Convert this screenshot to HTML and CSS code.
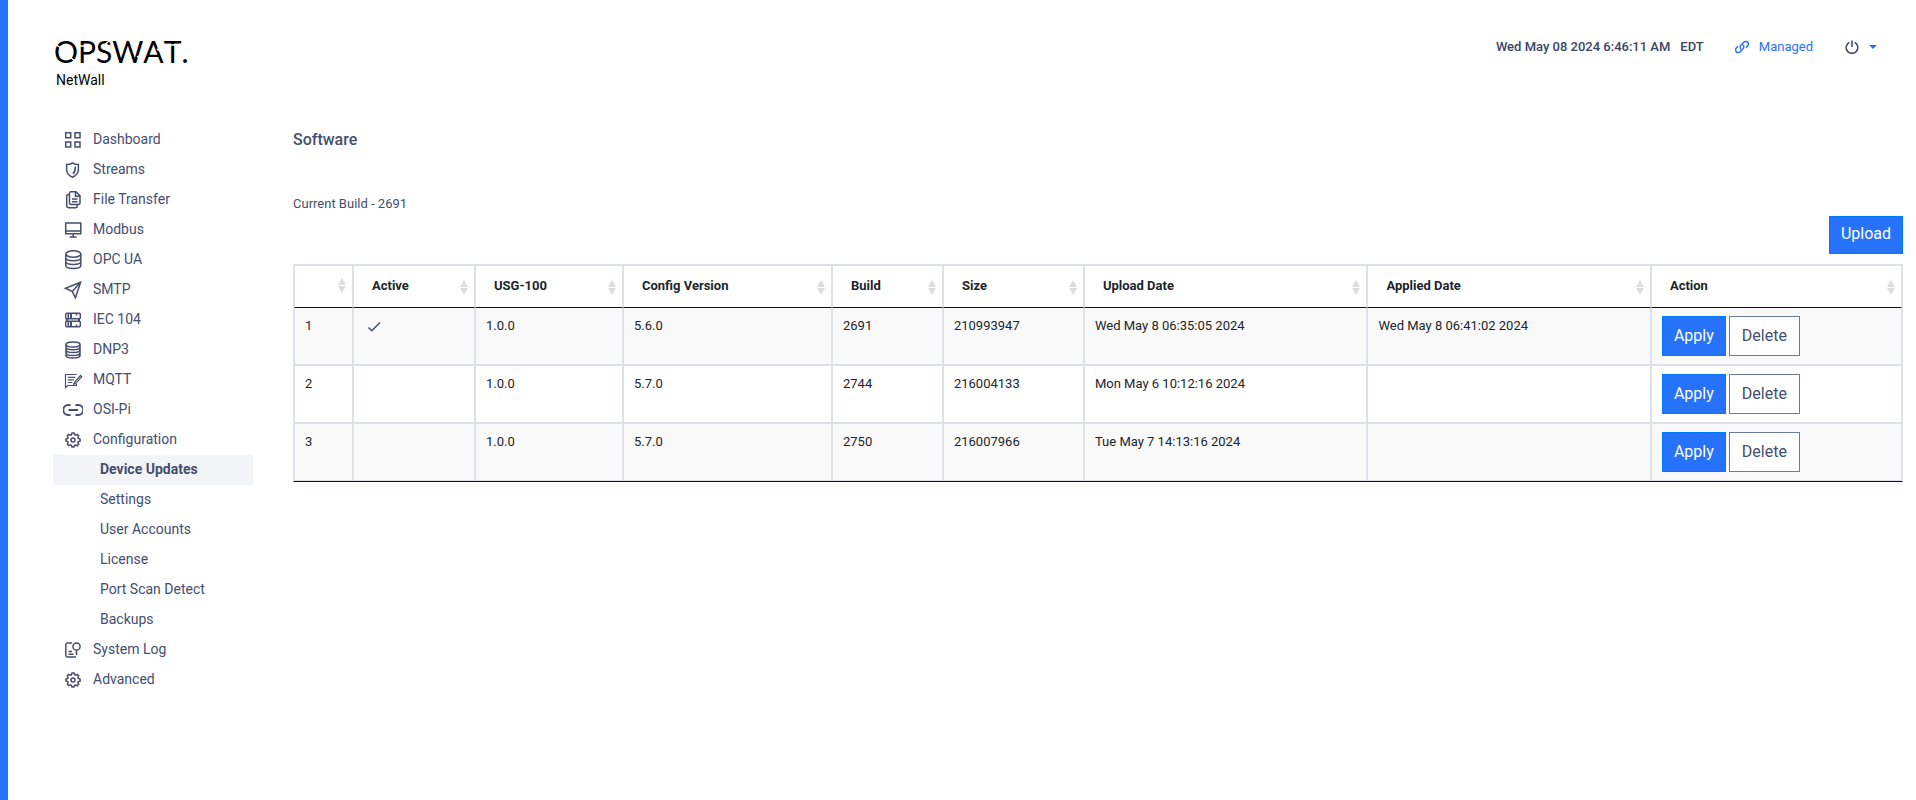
FILE: index.html
```
<!DOCTYPE html>
<html lang="en">
<head>
  <meta charset="UTF-8" />
  <meta name="viewport" content="width=device-width, initial-scale=1.0"/>
  <title>OPSWAT NetWall - Software</title>
  <link rel="stylesheet" href="styles.css">
</head>
<body>
  <div class="page">
    <header class="header">
      <div class="brand">
        <svg class="logo" width="150" height="32" viewBox="0 0 150 32" role="img" aria-label="OPSWAT.">
          <text class="logo-text" x="1" y="27">OPSWAT.</text>
          <!-- stencil cuts -->
          <path class="logo-cut" d="M2 8l6 4M17 21l6 5M27 10h5M55 6l-5 4M47 22l6-4M84 21l5-2M104 13l5 3M117 9h8"/>
        </svg>
        <span class="product">NetWall</span>
      </div>
      <div class="status">
        <span class="clock">Wed May 08 2024 6:46:11 AM</span>
        <span class="zone">EDT</span>
        <a class="managed" href="#">
          <svg class="icon-sm" viewBox="0 0 14 14"><path d="M6.2 9.2a2.8 2.8 0 0 1-.3-4L8.700 2.200a2.700 2.700 0 0 1 3.900 3.800L11 7.600M7.800 4.800a2.800 2.800 0 0 1 .3 4L5.300 11.800A2.700 2.700 0 0 1 1.400 8L3 6.400"/></svg>
          Managed
        </a>
        <button class="power" aria-label="Power">
          <svg class="icon-sm" viewBox="0 0 14 14"><path d="M7 .5v6.500M4.300 2.400a5.800 5.800 0 1 0 5.400 0"/></svg>
          <span class="caret"></span>
        </button>
      </div>
    </header>

    <div class="layout">
      <nav class="sidebar">
        <a class="nav-item" href="#"><svg class="icon" viewBox="0 0 20 20"><path d="M2.700 2.700h5v5h-5zM12 2.700h5v5h-5zM2.700 12h5v5h-5zM12 12h5v5h-5z"/></svg>Dashboard</a>
        <a class="nav-item" href="#"><svg class="icon" viewBox="0 0 20 20"><path d="M9.500 2.800c2 1.400 4 1.700 5.900 1.700v5c0 3.600-2.600 6.200-5.900 7.700-3.300-1.500-5.900-4.100-5.900-7.700v-5c1.900 0 3.900-.3 5.900-1.700zM12.300 6.500c.2 3.500-.5 5.500-2.300 7.500"/></svg>Streams</a>
        <a class="nav-item" href="#"><svg class="icon" viewBox="0 0 20 20"><path d="M8 1.800h5l4 4V13a1.500 1.500 0 0 1-1.500 1.500H8A1.500 1.500 0 0 1 6.500 13V3.300A1.500 1.500 0 0 1 8 1.800zM12.500 2v4.300H17M9 9h5.500M9 11.700h5.500M6.500 4.500h-1A1.800 1.800 0 0 0 3.700 6.300v9.200A2.300 2.300 0 0 0 6 17.800h6.500a1.800 1.800 0 0 0 1.800-1.800v-1.500"/></svg>File Transfer</a>
        <a class="nav-item" href="#"><svg class="icon" viewBox="0 0 20 20"><path d="M2.700 3h15.100v10.800H2.700zM2.700 11h15.100M10.200 13.800v3.200M6.800 17h6.800"/></svg>Modbus</a>
        <a class="nav-item" href="#"><svg class="icon" viewBox="0 0 20 20"><ellipse cx="10.300" cy="4" rx="7.500" ry="3.200"/><path d="M2.800 4v11.500c0 1.700 3.300 3 7.500 3s7.500-1.300 7.500-3V4M2.800 7.700c0 1.700 3.300 3 7.500 3s7.500-1.300 7.500-3M2.800 11.600c0 1.700 3.300 3 7.500 3s7.500-1.300 7.500-3"/></svg>OPC UA</a>
        <a class="nav-item" href="#"><svg class="icon" viewBox="0 0 20 20"><path d="M17.600 2.300 2.400 8.200l6.800 3.200 3.200 6.400zM9.200 11.400l8.400-9.100"/></svg>SMTP</a>
        <a class="nav-item" href="#"><svg class="icon" viewBox="0 0 20 20"><rect x="2.700" y="3.300" width="14.600" height="5.500" rx="1"/><rect x="2.700" y="11.300" width="14.600" height="5.500" rx="1"/><path d="M4 9v2M16 9v2M8 4v4M8 12v4" stroke-width="2"/><path d="M5.300 4v4M5.300 12v4M13.500 4v1.500M13.500 14.500V16"/></svg>IEC 104</a>
        <a class="nav-item" href="#"><svg class="icon" viewBox="0 0 20 20"><ellipse cx="10" cy="4.500" rx="7" ry="2.500"/><path d="M3 4.500v11C3 17 6 18 10 18s7-1 7-2.500v-11M3 7.300c0 1.500 3 2.500 7 2.500s7-1 7-2.500M3 10.100c0 1.500 3 2.500 7 2.500s7-1 7-2.500M3 12.900c0 1.500 3 2.500 7 2.500s7-1 7-2.500"/></svg>DNP3</a>
        <a class="nav-item" href="#"><svg class="icon" viewBox="0 0 20 20"><path d="M13.500 4.500h-11v13l2.500-2h8.500v-1.500M4.800 7.300h7.500M4.800 9.900h6M4.800 12.500h4.500M17.600 5.500l-6 6.500-.9 2.300 2.200-1 5.800-6.500z" stroke-width="1.200"/></svg>MQTT</a>
        <a class="nav-item" href="#"><svg class="icon" viewBox="0 0 20 20"><path d="M7.500 5H5.300a4.700 4.700 0 0 0 0 10h2.200M12.500 5h2.700a4.700 4.700 0 0 1 0 10h-2.700M5.500 10h9.500" stroke-width="1.900"/></svg>OSI-Pi</a>
        <a class="nav-item" href="#"><svg class="icon" viewBox="0 0 20 20"><use href="#gear"/></svg>Configuration</a>
        <a class="nav-item sub active" href="#">Device Updates</a>
        <a class="nav-item sub" href="#">Settings</a>
        <a class="nav-item sub" href="#">User Accounts</a>
        <a class="nav-item sub" href="#">License</a>
        <a class="nav-item sub" href="#">Port Scan Detect</a>
        <a class="nav-item sub" href="#">Backups</a>
        <a class="nav-item" href="#"><svg class="icon" viewBox="0 0 20 20"><path d="M9 3H4.500A1.700 1.700 0 0 0 2.800 4.700v10.600A1.700 1.700 0 0 0 4.500 17H13M5.500 11.500H9M5.500 14.200h5M13.500 10.200V15"/><circle cx="13.500" cy="6.500" r="3.600"/></svg>System Log</a>
        <a class="nav-item" href="#"><svg class="icon" viewBox="0 0 20 20"><g id="gear"><path d="M8.400 4.800 9 3h2l.6 1.800 1 .4 1.700-.8 1.400 1.400-.8 1.700.4 1 1.800.6v2l-1.800.6-.4 1 .8 1.700-1.400 1.400-1.700-.8-1 .4L11 17H9l-.6-1.800-1-.4-1.700.8-1.400-1.400.8-1.700-.4-1-1.800-.6V9l1.800-.6.4-1-.8-1.700 1.400-1.400 1.700.8z"/><circle cx="10" cy="10" r="2"/></g></svg>Advanced</a>
      </nav>

      <main class="content">
        <h1>Software</h1>
        <p class="build">Current Build - 2691</p>
        <div class="toolbar">
          <button class="btn btn-primary btn-upload">Upload</button>
        </div>
        <table class="software">
          <colgroup>
            <col class="col-num"><col class="col-active"><col class="col-usg"><col class="col-config"><col class="col-build"><col class="col-size"><col class="col-date"><col class="col-date"><col class="col-action">
          </colgroup>
          <thead>
            <tr>
              <th><button class="sort" aria-label="Sort by number"><span></span><i class="arrows"></i></button></th>
              <th><button class="sort">Active<i class="arrows"></i></button></th>
              <th><button class="sort">USG-100<i class="arrows"></i></button></th>
              <th><button class="sort">Config Version<i class="arrows"></i></button></th>
              <th><button class="sort">Build<i class="arrows"></i></button></th>
              <th><button class="sort">Size<i class="arrows"></i></button></th>
              <th><button class="sort">Upload Date<i class="arrows"></i></button></th>
              <th><button class="sort">Applied Date<i class="arrows"></i></button></th>
              <th><button class="sort">Action<i class="arrows"></i></button></th>
            </tr>
          </thead>
          <tbody>
            <tr>
              <td>1</td>
              <td><svg class="check" viewBox="0 0 20 20" role="img" aria-label="Active"><path d="M4.500 11.500l3.300 3.300L16 6.500"/></svg></td>
              <td>1.0.0</td>
              <td>5.6.0</td>
              <td>2691</td>
              <td>210993947</td>
              <td>Wed May 8 06:35:05 2024</td>
              <td>Wed May 8 06:41:02 2024</td>
              <td><div class="actions"><button class="btn btn-primary">Apply</button><button class="btn btn-outline">Delete</button></div></td>
            </tr>
            <tr>
              <td>2</td>
              <td></td>
              <td>1.0.0</td>
              <td>5.7.0</td>
              <td>2744</td>
              <td>216004133</td>
              <td>Mon May 6 10:12:16 2024</td>
              <td></td>
              <td><div class="actions"><button class="btn btn-primary">Apply</button><button class="btn btn-outline">Delete</button></div></td>
            </tr>
            <tr>
              <td>3</td>
              <td></td>
              <td>1.0.0</td>
              <td>5.7.0</td>
              <td>2750</td>
              <td>216007966</td>
              <td>Tue May 7 14:13:16 2024</td>
              <td></td>
              <td><div class="actions"><button class="btn btn-primary">Apply</button><button class="btn btn-outline">Delete</button></div></td>
            </tr>
          </tbody>
        </table>
      </main>
    </div>
  </div>
</body>
</html>
```
FILE: styles.css
```
* {
  margin: 0;
  padding: 0;
  box-sizing: border-box;
}

body {
  font-family: Roboto, "Liberation Sans", sans-serif;
  font-size: 13px;
  line-height: 20px;
  color: #212529;
  background: #fff;
}

button {
  font: inherit;
  color: inherit;
  background: none;
  border: none;
  cursor: pointer;
}

a {
  color: inherit;
  text-decoration: none;
}

svg {
  fill: none;
  stroke: currentColor;
  flex-shrink: 0;
}

.page {
  min-height: 100vh;
  border-left: 8px solid #2672fb;
  padding: 0 13px 0 45px;
}

/* header */
.header {
  display: flex;
  justify-content: space-between;
  align-items: flex-start;
  padding: 36px 26px 35px 0;
}

.brand {
  display: flex;
  flex-direction: column;
  gap: 2px;
  color: #000;
}

.logo {
  overflow: visible;
}

.logo-text {
  font-family: Lato, sans-serif;
  font-size: 30px;
  font-kerning: none;
  fill: #000;
  stroke: none;
}

.logo-cut {
  stroke: #fff;
  stroke-width: 1.5;
}

.product {
  padding-left: 3px;
  font-size: 14px;
}

.status {
  display: flex;
  align-items: center;
  height: 22px;
  font-weight: 500;
  color: #3c4564;
}

.zone {
  margin-left: 10px;
}

.managed {
  display: flex;
  align-items: center;
  gap: 10px;
  margin-left: 31px;
  font-weight: 400;
  color: #2672fb;
}

.icon-sm {
  width: 14px;
  height: 14px;
  stroke-width: 1.5;
}

.power {
  display: flex;
  align-items: center;
  gap: 10px;
  margin-left: 32px;
}

.caret {
  border: 4px solid transparent;
  border-top-color: #2672fb;
  border-bottom: none;
}

/* sidebar */
.layout {
  display: flex;
  gap: 40px;
}

.sidebar {
  width: 200px;
  flex-shrink: 0;
}

.nav-item {
  display: flex;
  align-items: center;
  gap: 10px;
  height: 30px;
  padding: 0 0 2px 10px;
  font-size: 14px;
  color: #444e6e;
}

.nav-item.sub {
  padding-left: 47px;
}

.nav-item.active {
  font-weight: 700;
  background: #f3f4f8;
}

.icon {
  width: 20px;
  height: 20px;
  margin-top: 2px;
  stroke-width: 1.5;
}

/* content */
.content {
  flex: 1;
  min-width: 0;
}

h1 {
  font-size: 16px;
  line-height: 30px;
  font-weight: 500;
  color: #444e6e;
}

.build {
  margin-top: 39px;
  color: #444e6e;
}

.toolbar {
  display: flex;
  justify-content: flex-end;
  padding: 2px 0 10px;
}

.btn {
  height: 40px;
  padding: 0 11px 2px;
  font-size: 16px;
}

.btn-primary {
  color: #fff;
  background: #2672fb;
  border: 1px solid #007bff;
}

.btn-outline {
  padding: 0 12px 2px;
  color: #444e6e;
  background: #fff;
  border: 1px solid #6b7a9f;
}

.btn-upload {
  height: 38px;
}

/* table */
.software {
  width: 100%;
  table-layout: fixed;
  border: 1px solid #dee2e6;
  border-bottom-color: #111;
  border-collapse: separate;
  border-spacing: 0;
  line-height: 19px;
}

.col-num { width: 3.67%; }
.col-active { width: 7.59%; }
.col-usg { width: 9.2%; }
.col-config { width: 13%; }
.col-build { width: 6.9%; }
.col-size { width: 8.77%; }
.col-date { width: 17.63%; }
.col-action { width: 15.61%; }

th {
  border: 1px solid #dee2e6;
  border-bottom-color: #111;
  padding: 10px 6px 12px 18px;
}

.sort {
  display: flex;
  justify-content: space-between;
  align-items: flex-end;
  width: 100%;
  font-weight: 700;
}

/* up and down triangles stacked */
.arrows {
  display: flex;
  flex-direction: column;
  gap: 1px;
}

.arrows::before,
.arrows::after {
  content: "";
  border: 4px solid transparent;
}

.arrows::before {
  border-top: none;
  border-bottom: 7px solid #ddd;
}

.arrows::after {
  border-bottom: none;
  border-top: 7px solid #ddd;
}

td {
  border: 1px solid #dee2e6;
  padding: 8px 10px;
  vertical-align: top;
}

tbody tr:first-child td {
  border-top: none;
}

tbody tr:nth-child(odd) {
  background: #f9f9f9;
}

.check {
  display: block;
  width: 20px;
  height: 20px;
  stroke: #444e6e;
  stroke-width: 1.5;
}

.actions {
  display: flex;
  gap: 3px;
}
```
